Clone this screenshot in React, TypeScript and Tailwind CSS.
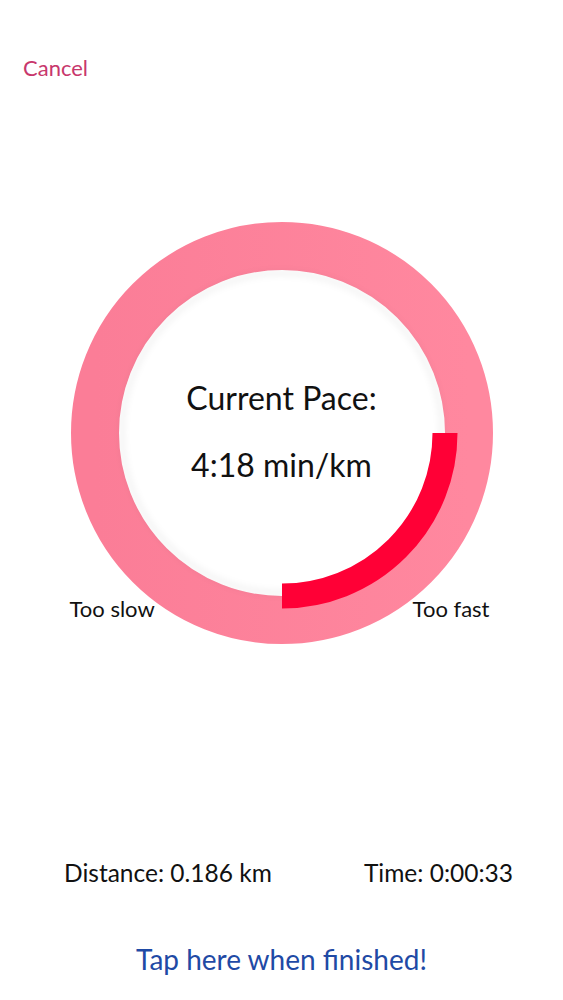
import React from "react";

export default function App() {
  return (
    <div
      className="w-[563px] h-[1000px] bg-white flex flex-col overflow-hidden"
      style={{ fontFamily: "Lato, 'Noto Sans', sans-serif" }}
    >
      <div className="pt-[55px] pl-[23px] h-[221px]">
        <span className="text-[22px] leading-[26px] text-[#c8376c]">Cancel</span>
      </div>

      <div className="relative mx-auto w-[424px] h-[424px]">
        <svg width="424" height="424" viewBox="0 0 424 424" className="absolute inset-0">
          <defs>
            <linearGradient id="pinkGrad" x1="0" y1="0" x2="1" y2="0">
              <stop offset="0" stopColor="#fb7d97" />
              <stop offset="1" stopColor="#ff889f" />
            </linearGradient>
            <filter id="soft" x="-20%" y="-20%" width="140%" height="140%">
              <feGaussianBlur stdDeviation="3" />
            </filter>
          </defs>
          <circle cx="212" cy="212" r="187" fill="none" stroke="url(#pinkGrad)" strokeWidth="48" />
          <circle cx="212" cy="212" r="160" fill="none" stroke="#000" strokeOpacity="0.05" strokeWidth="5" filter="url(#soft)" />
          <path d="M 375 212 A 163 163 0 0 1 212 375" fill="none" stroke="#ff0036" strokeWidth="25" />
        </svg>

        <div className="absolute left-0 right-0 top-[158px] flex flex-col items-center text-[#111]">
          <div className="text-[32px] leading-[38px]">Current Pace:</div>
          <div className="mt-[29px] text-[32px] leading-[38px]">4:18 min/km</div>
        </div>

        <div className="absolute left-0 top-[375px] text-[22px] leading-[26px] text-[#111]">Too slow</div>
        <div className="absolute right-[4px] top-[375px] text-[22px] leading-[26px] text-[#111]">Too fast</div>
      </div>

      <div className="mt-[214px] flex justify-between pl-[64px] pr-[50px] text-[24.5px] leading-[28px] text-[#111]">
        <span>Distance: 0.186 km</span>
        <span>Time: 0:00:33</span>
      </div>

      <div className="mt-[56px] text-center text-[28px] leading-[32px] text-[#1f4aa5]">
        Tap here when finished!
      </div>
    </div>
  );
}
